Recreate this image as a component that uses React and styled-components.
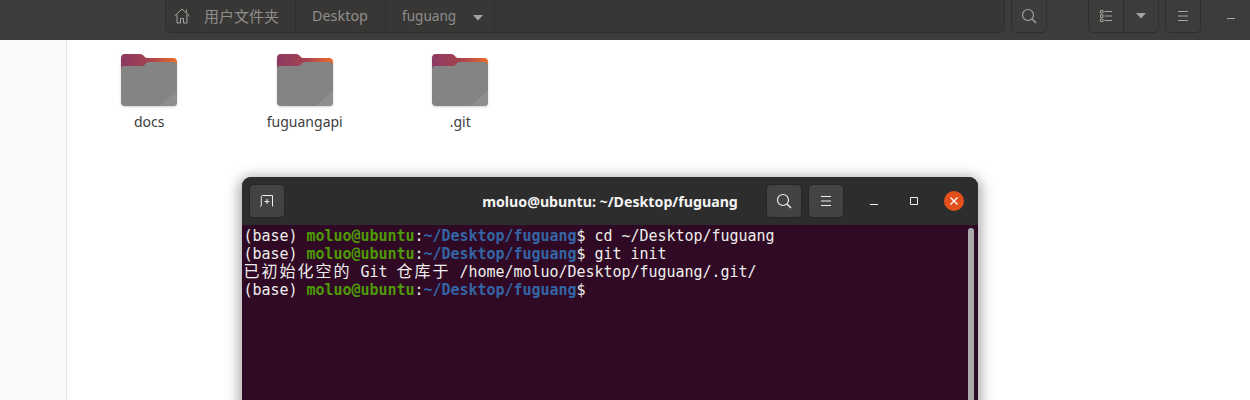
import React from 'react';
import styled, { createGlobalStyle } from 'styled-components';

const GlobalStyle = createGlobalStyle`
  html, body {
    margin: 0;
    padding: 0;
    width: 1250px;
    height: 400px;
    overflow: hidden;
    background: #fafafa;
    font-family: "Noto Sans", "Noto Sans CJK SC", sans-serif;
  }
`;

// file manager
const Page = styled.div`
  position: relative;
  width: 1250px;
  height: 400px;
  overflow: hidden;
  display: flex;
  flex-direction: column;
`;

const Toolbar = styled.div`
  height: 40px;
  flex: none;
  box-sizing: border-box;
  background: #3d3c3a;
  display: flex;
  align-items: flex-end;
  padding: 0 0 7px 165px;
  overflow: hidden;
`;

const ToolGroup = styled.div`
  height: 40px;
  flex: none;
  display: flex;
  box-sizing: border-box;
  border: 1px solid #302f2d;
  border-radius: 5px;
  margin-left: ${p => p.$gap || 0}px;
  background: ${p => p.$dark ? '#383735' : '#3d3c3a'};
  width: ${p => p.$width}px;
`;

const Crumb = styled.div`
  width: ${p => p.$width}px;
  box-sizing: border-box;
  display: flex;
  align-items: center;
  padding-top: 5px;
  padding-left: ${p => p.$pad}px;
  color: #8f8e8c;
  font-size: ${p => p.$size || 14}px;
  border-right: ${p => p.$last ? 'none' : '1px solid #302f2d'};
  white-space: nowrap;
  flex: none;
`;

const CrumbLabel = styled.span`
  margin-left: ${p => p.$gap || 0}px;
`;

const ToolCell = styled.div`
  flex: 1;
  display: flex;
  align-items: center;
  justify-content: center;
  padding-top: 5px;
  border-right: ${p => p.$split ? '1px solid #302f2d' : 'none'};
`;

const WindowMin = styled.div`
  width: 8px;
  height: 1px;
  background: #a5a4a2;
  margin-left: 26px;
  margin-bottom: 14px;
  align-self: flex-end;
`;

const Content = styled.div`
  flex: 1;
  display: flex;
  background: #fff;
`;

const Sidebar = styled.div`
  width: 66px;
  flex: none;
  background: #fafafa;
  border-right: 1px solid #e3e3e3;
`;

const FileGrid = styled.div`
  display: flex;
  align-items: flex-start;
  padding: 13px 0 0 4.5px;
`;

const FileItem = styled.div`
  width: 155.5px;
  display: flex;
  flex-direction: column;
  align-items: center;
`;

const FolderIcon = styled.svg`
  display: block;
  filter: drop-shadow(0 1px 1px rgba(0, 0, 0, 0.18));
`;

const FileName = styled.div`
  font-size: 14px;
  line-height: 18px;
  margin-top: 6px;
  color: #3d3d3d;
`;

// terminal window, floats over the file manager
const TermWindow = styled.div`
  position: absolute;
  left: 242px;
  top: 177px;
  width: 736px;
  height: 300px;
  border-radius: 9px 9px 0 0;
  overflow: hidden;
  box-shadow: 0 3px 14px 3px rgba(0, 0, 0, 0.35);
  background: #300a24;
`;

const TermHeader = styled.div`
  height: 48px;
  background: #2d2d2d;
  display: grid;
  grid-template-columns: 1fr auto 1fr;
  align-items: center;
`;

const HeaderLeft = styled.div`
  display: flex;
  padding-left: 8px;
`;

const HeaderRight = styled.div`
  display: flex;
  align-items: center;
  justify-content: flex-end;
  padding-right: 4px;
  gap: 8px;
`;

const HeaderButton = styled.div`
  width: 34px;
  height: 32px;
  border-radius: 4px;
  background: #434343;
  box-shadow: 0 0 0 1px #262626;
  display: flex;
  align-items: center;
  justify-content: center;
`;

const Title = styled.div`
  color: #f4f4f4;
  font-size: 14.2px;
  font-weight: 700;
  white-space: nowrap;
`;

const WindowButtons = styled.div`
  display: flex;
  margin-left: 3px;
`;

const WindowButton = styled.div`
  width: 40px;
  height: 32px;
  display: flex;
  align-items: center;
  justify-content: center;
`;

const CloseCircle = styled.div`
  width: 20px;
  height: 20px;
  border-radius: 50%;
  background: #e2511c;
  display: flex;
  align-items: center;
  justify-content: center;
`;

const TermBody = styled.div`
  position: relative;
  height: 252px;
  padding: 2px 0 0 1.5px;
  box-sizing: border-box;
  font-family: "DejaVu Sans Mono", "Noto Sans CJK SC", monospace;
  font-size: 15px;
  line-height: 18px;
  letter-spacing: -0.03px;
  color: #eeeeec;
`;

const Line = styled.div`
  height: 18px;
  white-space: pre;
`;

const User = styled.span`
  color: #4e9a06;
  font-weight: 700;
`;

const Cwd = styled.span`
  color: #3465a4;
  font-weight: 700;
`;

const Cjk = styled.span`
  font-family: "Noto Sans CJK SC", sans-serif;
  font-size: 16px;
  line-height: 0;
  letter-spacing: 2px;
`;

const Scrollbar = styled.div`
  position: absolute;
  top: 3px;
  right: 4px;
  width: 6px;
  height: 260px;
  border-radius: 3px;
  background: #aaaaaa;
`;

const Folder = () => (
  <FolderIcon width="58" height="54" viewBox="0 0 58 54">
    <defs>
      <linearGradient id="tab" x1="0" y1="0" x2="1" y2="0">
        <stop offset="0" stopColor="#8c3a62" />
        <stop offset="0.5" stopColor="#a4424f" />
        <stop offset="1" stopColor="#ec6c2c" />
      </linearGradient>
    </defs>
    <path d="M1 5a4 4 0 0 1 4-4h15c2 0 3 1 4 2.200c1 1.200 2 1.800 3.500 1.800H53a4 4 0 0 1 4 4v14H1z" fill="url(#tab)" />
    <path d="M1 16a3 3 0 0 1 3-3h17c2 0 3-.5 4-1.500c1-1.500 2-2.500 4-2.500h24a4 4 0 0 1 4 4v36a4 4 0 0 1-4 4H5a4 4 0 0 1-4-4z" fill="#848484" />
    <path d="M57 37v12a4 4 0 0 1-4 4H40z" fill="#8e8e8e" />
  </FolderIcon>
);

const Magnifier = ({ color }) => (
  <svg width="16" height="16" viewBox="0 0 16 16" fill="none" stroke={color} strokeWidth="1.200">
    <circle cx="7" cy="7" r="5.500" />
    <path d="M11 11l4 4" strokeWidth="1.500" />
  </svg>
);

const Burger = ({ color }) => (
  <svg width="12" height="10" viewBox="0 0 12 10" stroke={color} strokeWidth="1">
    <path d="M1 .5h10M1 5h10M1 9.500h10" />
  </svg>
);

const Caret = () => (
  <svg width="10" height="6" viewBox="0 0 10 6">
    <path d="M0 0h10L5 5.500z" fill="#a5a4a2" />
  </svg>
);

const Prompt = () => (
  <>
    (base) <User>moluo@ubuntu</User>:<Cwd>~/Desktop/fuguang</Cwd>$
  </>
);

const App = () => (
  <Page>
    <GlobalStyle />
    <Toolbar>
      <ToolGroup $width={840} $dark>
        <Crumb $width={130} $pad={8} $size={15}>
          <svg width="16" height="16" viewBox="0 0 16 16" fill="none" stroke="#a5a4a2" strokeWidth="1">
            <path d="M.5 8L8 1l7.500 7M12.500 4.500V1.500M3 6.500V15h3.500v-4.500h3V15H13V6.500" />
          </svg>
          <CrumbLabel $gap={14}>用户文件夹</CrumbLabel>
        </Crumb>
        <Crumb $width={90} $pad={16} $size={14.4}>Desktop</Crumb>
        <Crumb $width={109} $pad={16} $size={13.6}>
          fuguang
          <CrumbLabel $gap={17}><Caret /></CrumbLabel>
        </Crumb>
      </ToolGroup>
      <ToolGroup $width={36} $gap={6}>
        <ToolCell><Magnifier color="#a5a4a2" /></ToolCell>
      </ToolGroup>
      <ToolGroup $width={71} $gap={41}>
        <ToolCell $split>
          <svg width="12" height="12" viewBox="0 0 12 12" fill="none" stroke="#a5a4a2">
            <path d="M.5.500h2.500v2.500H.5zM.5 4.800h2.500v2.500H.5zM.5 9h2.500v2.500H.5zM4.500 1.500H12M4.500 6H12M4.500 10.500H12" />
          </svg>
        </ToolCell>
        <ToolCell><Caret /></ToolCell>
      </ToolGroup>
      <ToolGroup $width={36} $gap={6}>
        <ToolCell><Burger color="#a5a4a2" /></ToolCell>
      </ToolGroup>
      <WindowMin />
    </Toolbar>
    <Content>
      <Sidebar />
      <FileGrid>
        {['docs', 'fuguangapi', '.git'].map(name => (
          <FileItem key={name}>
            <Folder />
            <FileName>{name}</FileName>
          </FileItem>
        ))}
      </FileGrid>
    </Content>

    <TermWindow>
      <TermHeader>
        <HeaderLeft>
          <HeaderButton>
            <svg width="16" height="14" viewBox="0 0 16 14" fill="none" stroke="#eee" strokeWidth="1">
              <path d="M1 12.500c.8 0 1.300-.5 1.300-1.500V3c0-1 .5-1.500 1.500-1.500h9.700v11M5.500 7.500h5M8 5v5" />
            </svg>
          </HeaderButton>
        </HeaderLeft>
        <Title>moluo@ubuntu: ~/Desktop/fuguang</Title>
        <HeaderRight>
          <HeaderButton><Magnifier color="#eee" /></HeaderButton>
          <HeaderButton><Burger color="#eee" /></HeaderButton>
          <WindowButtons>
            <WindowButton>
              <svg width="8" height="8" viewBox="0 0 8 8" stroke="#eee"><path d="M0 7.500h8" /></svg>
            </WindowButton>
            <WindowButton>
              <svg width="8" height="8" viewBox="0 0 8 8" fill="none" stroke="#eee"><path d="M.5.500h7v7h-7z" /></svg>
            </WindowButton>
            <WindowButton>
              <CloseCircle>
                <svg width="8" height="8" viewBox="0 0 8 8" stroke="#fff" strokeWidth="1.300"><path d="M.5.500l7 7M7.500.500l-7 7" /></svg>
              </CloseCircle>
            </WindowButton>
          </WindowButtons>
        </HeaderRight>
      </TermHeader>
      <TermBody>
        <Line><Prompt /> cd ~/Desktop/fuguang</Line>
        <Line><Prompt /> git init</Line>
        <Line><Cjk>已初始化空的</Cjk> Git <Cjk>仓库于</Cjk> /home/moluo/Desktop/fuguang/.git/</Line>
        <Line><Prompt /></Line>
        <Scrollbar />
      </TermBody>
    </TermWindow>
  </Page>
);

export default App;
